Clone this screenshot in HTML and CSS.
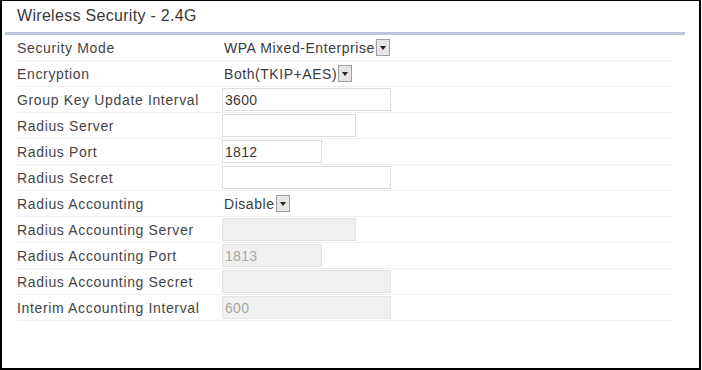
FILE: index.html
```html
<!DOCTYPE html>
<html lang="en">
<head>
    <meta charset="UTF-8">
    <title>Wireless Security - 2.4G</title>
    <link rel="stylesheet" href="styles.css">
</head>
<body>
    <div id="frame">
        <h1 class="panel-title">Wireless Security - 2.4G</h1>
        <form class="settings">
            <div class="row">
                <label class="row-label">Security Mode</label>
                <span class="dropdown"><span class="dropdown-text">WPA Mixed-Enterprise</span><span class="dropdown-btn"><svg width="6" height="4" viewBox="0 0 6 4"><path d="M0 0h6L3 4z" fill="#222"/></svg></span></span>
            </div>
            <div class="row">
                <label class="row-label">Encryption</label>
                <span class="dropdown"><span class="dropdown-text">Both(TKIP+AES)</span><span class="dropdown-btn"><svg width="6" height="4" viewBox="0 0 6 4"><path d="M0 0h6L3 4z" fill="#222"/></svg></span></span>
            </div>
            <div class="row">
                <label class="row-label">Group Key Update Interval</label>
                <input type="text" class="field wide" value="3600">
            </div>
            <div class="row">
                <label class="row-label">Radius Server</label>
                <input type="text" class="field mid" value="">
            </div>
            <div class="row">
                <label class="row-label">Radius Port</label>
                <input type="text" class="field short" value="1812">
            </div>
            <div class="row">
                <label class="row-label">Radius Secret</label>
                <input type="text" class="field wide" value="">
            </div>
            <div class="row">
                <label class="row-label">Radius Accounting</label>
                <span class="dropdown"><span class="dropdown-text">Disable</span><span class="dropdown-btn"><svg width="6" height="4" viewBox="0 0 6 4"><path d="M0 0h6L3 4z" fill="#222"/></svg></span></span>
            </div>
            <div class="row">
                <label class="row-label">Radius Accounting Server</label>
                <input type="text" class="field mid" value="" disabled>
            </div>
            <div class="row">
                <label class="row-label">Radius Accounting Port</label>
                <input type="text" class="field short" value="1813" disabled>
            </div>
            <div class="row">
                <label class="row-label">Radius Accounting Secret</label>
                <input type="text" class="field wide" value="" disabled>
            </div>
            <div class="row">
                <label class="row-label">Interim Accounting Interval</label>
                <input type="text" class="field wide" value="600" disabled>
            </div>
        </form>
    </div>
</body>
</html>
```

FILE: styles.css
```css
body {
    margin: 0;
    font-family: "Liberation Sans", Arial, sans-serif;
    color: #3a3a3a;
    background: #ffffff;
}

#frame {
    width: 697px;
    height: 367px;
    border: 2px solid #000000;
    border-top-width: 1px;
}

.panel-title {
    margin: 0 0 0 3px;
    width: 668px;
    padding: 6px 0 7px 12px;
    font-size: 16px;
    line-height: 18px;
    font-weight: normal;
    letter-spacing: 0.3px;
    color: #383838;
    border-bottom: 3px solid #bcc6da;
}

.settings {
    margin: 0 0 0 3px;
    width: 655px;
    padding-left: 12px;
}

.row {
    display: flex;
    align-items: center;
    height: 25px;
    border-bottom: 1px solid #f0f0f0;
}

.row-label {
    width: 205px;
    flex-shrink: 0;
    font-size: 14px;
    letter-spacing: 0.65px;
    color: #444444;
}

.field {
    box-sizing: border-box;
    height: 23px;
    margin: 0;
    padding: 0 2px;
    border: 1px solid #dcdcdc;
    background: #ffffff;
    font-family: "Liberation Sans", Arial, sans-serif;
    font-size: 14px;
    letter-spacing: 0.3px;
    color: #3a3a3a;
    outline: none;
}

.field:disabled {
    background: #f0f0f0;
    border-color: #e4e4e4;
    color: #a8a8a8;
}

.wide {
    width: 169px;
}

.mid {
    width: 134px;
}

.short {
    width: 100px;
}

.dropdown {
    display: flex;
    align-items: center;
    height: 19px;
    padding-left: 2px;
}

.dropdown-text {
    font-size: 14px;
    letter-spacing: 0.55px;
    color: #3a3a3a;
}

.dropdown-btn {
    display: flex;
    align-items: center;
    justify-content: center;
    width: 12px;
    height: 15px;
    margin-left: 1px;
    border: 1px solid #a0a0a0;
    background: #e6e6e6;
}
```
